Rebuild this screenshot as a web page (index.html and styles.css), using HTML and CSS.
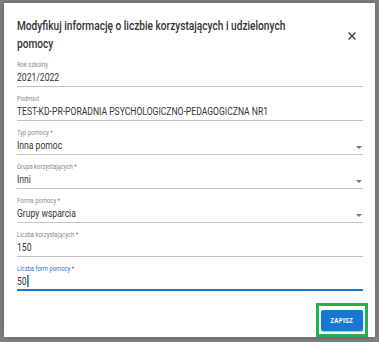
FILE: index.html
```html
<!DOCTYPE html>
<html lang="pl">
<head>
    <meta charset="UTF-8">
    <title>Modyfikuj informację</title>
    <link rel="stylesheet" href="styles.css">
</head>
<body>
    <div class="dialog">
        <div class="dialog-head">
            <h2 class="dialog-title"><span class="narrow title-text">Modyfikuj informację o liczbie korzystających i udzielonych pomocy</span></h2>
            <button class="close" aria-label="Zamknij">
                <svg width="10" height="10" viewBox="0 0 10 10"><path d="M1.5 1.5L8.5 8.5M8.5 1.5L1.5 8.5" stroke="#444" stroke-width="1.4"/></svg>
            </button>
        </div>

        <div class="field"><span class="label narrow">Rok szkolny</span><span class="value narrow">2021/2022</span></div>
        <div class="field"><span class="label narrow">Podmiot</span><span class="value narrow">TEST-KD-PR-PORADNIA PSYCHOLOGICZNO-PEDAGOGICZNA NR1</span></div>
        <div class="field select"><span class="label narrow">Typ pomocy *</span><span class="value narrow">Inna pomoc</span><span class="arrow"></span></div>
        <div class="field select"><span class="label narrow">Grupa korzystających *</span><span class="value narrow">Inni</span><span class="arrow"></span></div>
        <div class="field select"><span class="label narrow">Forma pomocy *</span><span class="value narrow">Grupy wsparcia</span><span class="arrow"></span></div>
        <div class="field"><span class="label narrow">Liczba korzystających *</span><span class="value narrow">150</span></div>
        <div class="field focused"><span class="label narrow">Liczba form pomocy <span class="req">*</span></span><span class="value narrow">50<span class="caret"></span></span></div>

        <div class="actions">
            <span class="highlight"><button class="save"><span class="narrow">ZAPISZ</span></button></span>
        </div>
    </div>
</body>
</html>
```

FILE: styles.css
```css
body {
    margin: 0;
    background: #808283;
    font-family: Roboto, "Liberation Sans", sans-serif;
    height: 342px;
    overflow: hidden;
}
/* screenshot text is horizontally condensed */
.narrow {
    display: block;
    white-space: nowrap;
    transform: scaleX(0.78);
    transform-origin: 0 50%;
}
.dialog {
    margin: 3px 0 0 4px;
    width: 371px;
    height: 334px;
    background: #fff;
    box-sizing: border-box;
    padding: 14px 12px 0 13px;
    box-shadow: 0 0 6px rgba(0,0,0,0.3);
}
.dialog-head {
    display: flex;
    align-items: center;
}
.dialog-title {
    margin: 0;
    width: 290px;
    font-size: 13px;
    line-height: 18px;
    font-weight: 500;
    color: #333;
}
.title-text {
    width: 370px;
    white-space: normal;
}
.close {
    margin-left: auto;
    margin-right: 6px;
    margin-top: 1px;
    border: 0;
    background: none;
    padding: 0;
    width: 10px;
    height: 10px;
    display: flex;
}
.field {
    position: relative;
    display: flex;
    flex-direction: column;
    padding: 7px 0 1px;
    border-bottom: 1px solid #c2c2c2;
    height: 25px;
}
.label {
    font-size: 7.5px;
    line-height: 10px;
    color: #8a8a8a;
}
.value {
    font-size: 11px;
    line-height: 15px;
    color: #333;
}
.select .arrow {
    position: absolute;
    right: 1px;
    top: 25px;
    border-left: 3px solid transparent;
    border-right: 3px solid transparent;
    border-top: 3px solid #777;
}
.focused {
    border-bottom: 2px solid #1976d2;
    padding-bottom: 0;
}
.focused .label {
    color: #1976d2;
}
.req {
    color: #e53935;
}
.caret {
    display: inline-block;
    width: 1.3px;
    height: 12px;
    background: #1976d2;
    vertical-align: -2px;
    margin-left: 1px;
}
.actions {
    display: flex;
    justify-content: flex-end;
    margin-top: 12px;
    margin-right: -5px;
}
.highlight {
    display: flex;
    padding: 4px 2px 3px;
    border: 3px solid #22b14c;
}
.save {
    display: flex;
    align-items: center;
    justify-content: center;
    width: 42px;
    height: 21px;
    border: 0;
    border-radius: 2px;
    background: #1976d2;
    color: #fff;
    font-family: inherit;
    font-size: 8px;
    font-weight: 700;
    letter-spacing: 0.3px;
    padding: 0;
    box-shadow: 0 1px 2px rgba(0,0,0,0.3);
}
.save .narrow {
    transform-origin: 50% 50%;
}
```
